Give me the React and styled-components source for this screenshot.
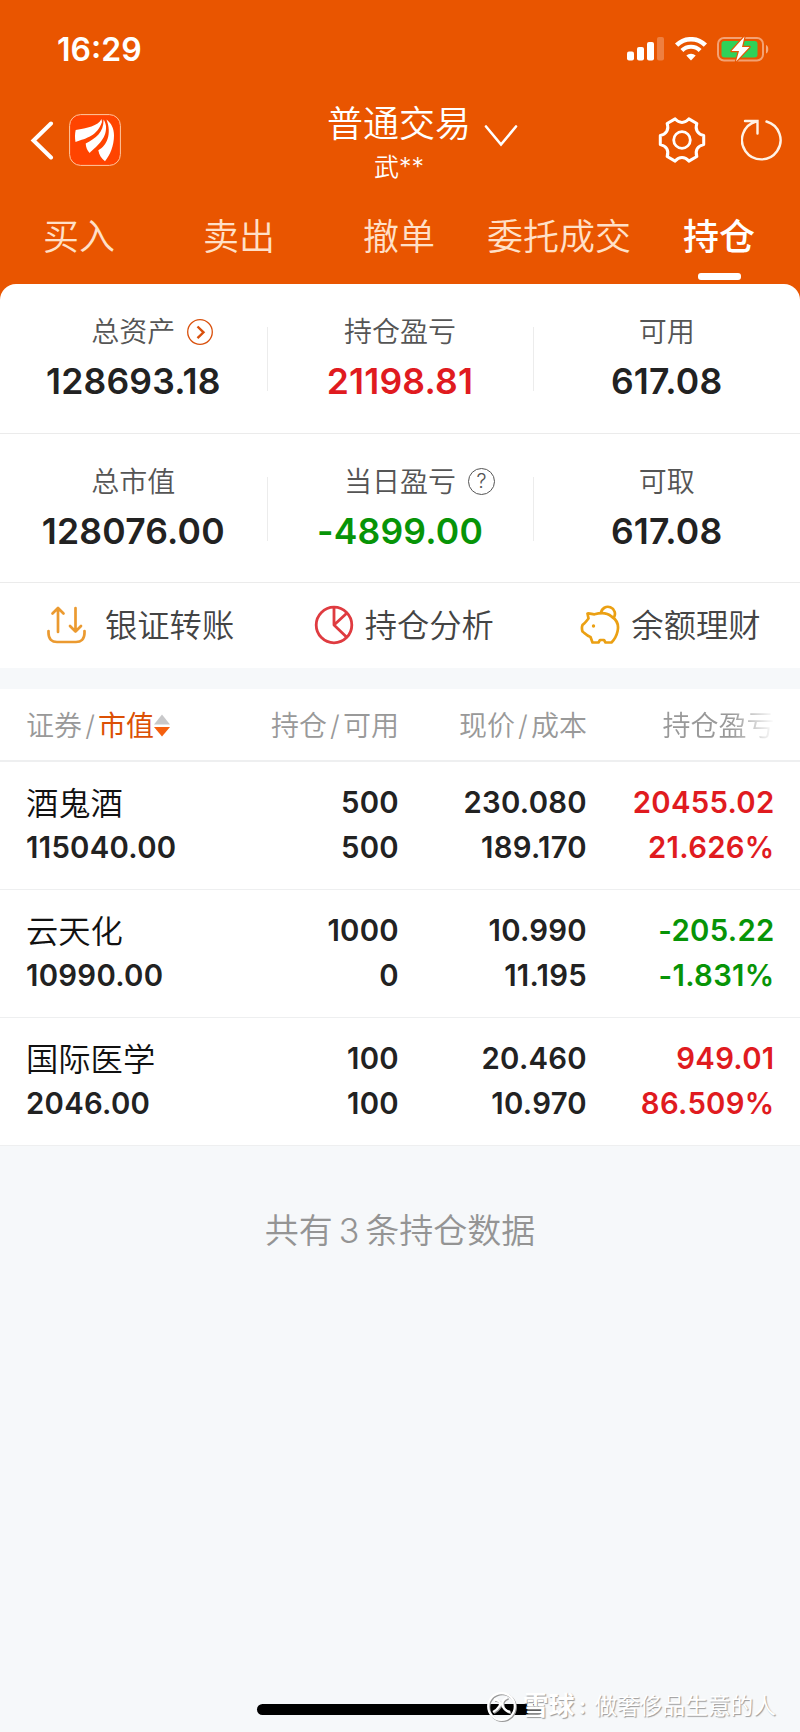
import styled, { createGlobalStyle } from "styled-components";

const summary = [
  [
    { label: "总资产", value: "128693.18", icon: "arrow" },
    { label: "持仓盈亏", value: "21198.81", tone: "up" },
    { label: "可用", value: "617.08" },
  ],
  [
    { label: "总市值", value: "128076.00" },
    { label: "当日盈亏", value: "-4899.00", tone: "down", icon: "help" },
    { label: "可取", value: "617.08" },
  ],
];

const tabs = ["买入", "卖出", "撤单", "委托成交", "持仓"];

const holdings = [
  {
    name: "酒鬼酒",
    marketValue: "115040.00",
    amount: "500",
    available: "500",
    price: "230.080",
    cost: "189.170",
    profit: "20455.02",
    percent: "21.626%",
    tone: "up",
  },
  {
    name: "云天化",
    marketValue: "10990.00",
    amount: "1000",
    available: "0",
    price: "10.990",
    cost: "11.195",
    profit: "-205.22",
    percent: "-1.831%",
    tone: "down",
  },
  {
    name: "国际医学",
    marketValue: "2046.00",
    amount: "100",
    available: "100",
    price: "20.460",
    cost: "10.970",
    profit: "949.01",
    percent: "86.509%",
    tone: "up",
  },
];

const tones = { up: "#e01b1f", down: "#079407" };

export default function App() {
  return (
    <>
      <GlobalStyle />
      <Screen>
        <Header>
          <StatusBar>
            <Time>16:29</Time>
            <StatusIcons>
              <SignalIcon />
              <WifiIcon />
              <BatteryIcon />
            </StatusIcons>
          </StatusBar>
          <TitleBar>
            <BarSide>
              <BackIcon />
              <LogoIcon />
            </BarSide>
            <TitleBlock>
              <Title>普通交易</Title>
              <DownIcon />
              <Account>武**</Account>
            </TitleBlock>
            <BarSide $end>
              <GearIcon />
              <RefreshIcon />
            </BarSide>
          </TitleBar>
          <Tabs>
            {tabs.map((tab) => (
              <Tab key={tab} $active={tab === "持仓"}>
                {tab}
              </Tab>
            ))}
          </Tabs>
        </Header>

        <Panel>
          {summary.map((row, i) => (
            <SummaryRow key={i}>
              {row.map((item) => (
                <SummaryCell key={item.label}>
                  <SummaryLabel>
                    <span>{item.label}</span>
                    {item.icon === "arrow" && <ArrowCircleIcon />}
                    {item.icon === "help" && <HelpCircle>?</HelpCircle>}
                  </SummaryLabel>
                  <SummaryValue $tone={item.tone}>{item.value}</SummaryValue>
                </SummaryCell>
              ))}
            </SummaryRow>
          ))}
          <Actions>
            <Action $gap="19px">
              <TransferIcon />
              银证转账
            </Action>
            <Action $gap="11px">
              <PieIcon />
              持仓分析
            </Action>
            <Action $gap="11px">
              <PigIcon />
              余额理财
            </Action>
          </Actions>
        </Panel>

        <Holdings>
          <HoldingsHead>
            <HeadCell>
              证券<Slash>/</Slash>
              <Sorted>市值</Sorted>
              <SortIcon />
            </HeadCell>
            <HeadCell $end>
              持仓<Slash>/</Slash>可用
            </HeadCell>
            <HeadCell $end>
              现价<Slash>/</Slash>成本
            </HeadCell>
            <HeadCell $end $fade>
              持仓盈亏
            </HeadCell>
          </HoldingsHead>
          {holdings.map((h) => (
            <HoldingRow key={h.name}>
              <HoldingCell>
                <StockName>{h.name}</StockName>
                <Figure>{h.marketValue}</Figure>
              </HoldingCell>
              <HoldingCell $end>
                <Figure>{h.amount}</Figure>
                <Figure>{h.available}</Figure>
              </HoldingCell>
              <HoldingCell $end>
                <Figure>{h.price}</Figure>
                <Figure>{h.cost}</Figure>
              </HoldingCell>
              <HoldingCell $end>
                <Figure $tone={h.tone}>{h.profit}</Figure>
                <Figure $tone={h.tone}>{h.percent}</Figure>
              </HoldingCell>
            </HoldingRow>
          ))}
        </Holdings>

        <Total>
          共有<TotalCount>3</TotalCount>条持仓数据
        </Total>

        <Bottom>
          <HomeIndicator />
          <Watermark>
            <SnowballIcon />
            <Brand>雪球</Brand>
            <Colon>:</Colon>
            <span>做奢侈品生意的人</span>
          </Watermark>
        </Bottom>
      </Screen>
    </>
  );
}

function SignalIcon() {
  return (
    <svg width="38" height="24" viewBox="0 0 38 24" fill="#fff">
      <rect x="0" y="14.5" width="7" height="9" rx="2" />
      <rect x="10" y="10" width="7" height="13.5" rx="2" />
      <rect x="20" y="5" width="7" height="18.5" rx="2" />
      <rect x="30" y="0" width="7" height="23.5" rx="2" opacity="0.25" />
    </svg>
  );
}

function WifiIcon() {
  return (
    <svg width="32" height="24" viewBox="0 0 32 24" fill="none" stroke="#fff">
      <path d="M1.6 8.2a20.4 20.4 0 0 1 28.8 0" strokeWidth="4.6" />
      <path d="M6.9 13.5a12.9 12.9 0 0 1 18.2 0" strokeWidth="4.2" />
      <path
        d="M11.3 18.6a6.8 6.8 0 0 1 9.4 0L16 23.4z"
        fill="#fff"
        stroke="none"
      />
    </svg>
  );
}

function BatteryIcon() {
  return (
    <svg width="53" height="28" viewBox="0 0 53 28">
      <rect
        x="1"
        y="3"
        width="45"
        height="22.5"
        rx="6"
        fill="none"
        stroke="#fff"
        strokeOpacity="0.45"
        strokeWidth="2"
      />
      <path d="M49 10v8.5c3-1 3-7.5 0-8.5z" fill="#fff" opacity="0.5" />
      <rect x="4.5" y="6" width="36" height="16.5" rx="3" fill="#30d158" />
      <path
        d="M27.5 1.5 14.5 16H22L19 26.5 32.5 12H25z"
        fill="#fff"
        stroke="#e95500"
        strokeWidth="2.4"
        paintOrder="stroke"
        strokeLinejoin="round"
      />
    </svg>
  );
}

function BackIcon() {
  return (
    <svg width="24" height="40" viewBox="0 0 24 40" fill="none">
      <path
        d="M21 3.5 3.5 20.5 21 37.5"
        stroke="#fff"
        strokeWidth="4"
        strokeLinecap="round"
      />
    </svg>
  );
}

function LogoIcon() {
  return (
    <svg width="52" height="52" viewBox="0 0 52 52">
      <rect
        x="0.6"
        y="0.6"
        width="50.8"
        height="50.8"
        rx="11"
        fill="#ff4400"
        stroke="#ffc9a0"
      />
      <g fill="#fff">
        <path d="M32.5 5C29 12 18 14 6.7 16 5.8 20 5.8 24 6.5 28 18 24 28 22 33 8z" />
        <path d="M34.6 5.5C34.5 19 27 24 16.7 29.5c.2 4 1.5 7 4 9.5C26 33 38 26 37 12c-.5-3-1.4-5-2.4-6.5z" />
        <path d="M37.5 5.5C42 9 45 14 45 21.5c0 10.5-4 19.5-9 25.8-3.5-2.5-6-6.5-6.7-11C38 31.5 43 20 37.5 5.5z" />
      </g>
    </svg>
  );
}

function DownIcon() {
  return (
    <svg width="34" height="24" viewBox="0 0 34 24" fill="none">
      <path
        d="M2 2.5 17 20.5 32 2.5"
        stroke="#fff"
        strokeWidth="2.6"
        strokeLinecap="round"
      />
    </svg>
  );
}

// six flat teeth joined by rounded valleys
function gearPath(cx, cy, outer, inner) {
  const at = (deg, r) => {
    const rad = (deg * Math.PI) / 180;
    return `${(cx + r * Math.cos(rad)).toFixed(2)} ${(cy + r * Math.sin(rad)).toFixed(2)}`;
  };
  let d = `M${at(-12, outer)}`;
  for (let a = 0; a < 360; a += 60) {
    d += `L${at(a + 12, outer)}C${at(a + 20, inner)} ${at(a + 40, inner)} ${at(a + 48, outer)}`;
  }
  return d + "Z";
}

function GearIcon() {
  return (
    <svg width="48" height="48" viewBox="0 0 48 48" fill="none" stroke="#fff">
      <path
        d={gearPath(24, 24, 22.2, 16.6)}
        strokeWidth="3"
        strokeLinejoin="round"
      />
      <circle cx="24" cy="24" r="8.3" strokeWidth="2.8" />
    </svg>
  );
}

function RefreshIcon() {
  return (
    <svg width="42" height="42" viewBox="0 0 42 42" fill="none">
      <path
        d="M25.5 2.5A19.3 19.3 0 1 1 15 2.5M4 2H16.5V14.5"
        stroke="#fff2e6"
        strokeWidth="2.4"
        strokeLinecap="round"
      />
    </svg>
  );
}

function ArrowCircleIcon() {
  return (
    <svg width="26" height="26" viewBox="0 0 26 26" fill="none" stroke="#d9500c">
      <circle cx="13" cy="13" r="12.3" strokeWidth="1.3" />
      <path d="m10.5 7.5 6 5.8-6 5.8" strokeWidth="2.4" />
    </svg>
  );
}

function TransferIcon() {
  return (
    <svg
      width="39"
      height="38"
      viewBox="0 0 39 38"
      fill="none"
      stroke="#eb9a30"
      strokeWidth="2.7"
      strokeLinecap="round"
      strokeLinejoin="round"
    >
      <path d="M11 26V2.5M5.5 7.5 11 2l5.5 5.5M28.5 2v23.5M23 20l5.5 5.5L34 20" />
      <path d="M1.5 25v2c0 6 3.5 9 8.5 9h19c5 0 8.5-3 8.5-9v-2" />
    </svg>
  );
}

function PieIcon() {
  return (
    <svg
      width="40"
      height="40"
      viewBox="0 0 40 40"
      fill="none"
      stroke="#df3b40"
      strokeWidth="2.8"
      strokeLinejoin="round"
    >
      <circle cx="20" cy="20" r="17.8" />
      <path d="M20 2.5V20L33 8M20 20l13 12.5" />
    </svg>
  );
}

function PigIcon() {
  return (
    <svg
      width="40"
      height="40"
      viewBox="0 0 40 40"
      fill="none"
      stroke="#eba013"
      strokeWidth="2.7"
      strokeLinejoin="round"
      strokeLinecap="round"
    >
      <path d="M7.5 8.5c3-.5 4.5 1 7 .8C21 7.5 27 7.5 31.5 11.5 37 15 39 20.5 37.5 26.5c-1 4.5-3 8-6 11H25.5L24 35H20l-1.5 2.5h-6L10.5 32C7 31 5 28.5 2.5 26.5c-.8-2.5-.8-4.5 0-6.5C5 18.5 6 16.5 8.5 13.5z" />
      <path d="M21 7.8a7 7 0 1 1 12.8 4.8" />
      <circle cx="13.5" cy="21" r="1.7" fill="#eba013" stroke="none" />
    </svg>
  );
}

function SortIcon() {
  return (
    <svg width="16" height="24" viewBox="0 0 16 24">
      <path d="M8 0.5 16 10.5H0z" fill="#c8c8ca" />
      <path d="M0 13h16L8 22.5z" fill="#f5600f" />
    </svg>
  );
}

function SnowballIcon() {
  return (
    <svg width="31" height="31" viewBox="0 0 31 31" fill="none" stroke="#fff">
      <circle cx="15.5" cy="15.5" r="13.3" strokeWidth="2.2" />
      <path
        d="M8 8.5c5 0 7.5 3 5.5 6.5-1.5 2.5-3.5 4.5-6.5 6M21.5 6.5c-3.5 1.5-6 4.5-5 8 1 3.5 4 5.5 7.5 6.5"
        strokeWidth="2.4"
      />
    </svg>
  );
}

const GlobalStyle = createGlobalStyle`
  * {
    box-sizing: border-box;
  }

  body {
    margin: 0;
    background: #f6f8fa;
    font-family: Inter, "Noto Sans CJK SC", sans-serif;
  }

  svg {
    display: block;
    flex-shrink: 0;
  }
`;

const Screen = styled.main`
  width: 800px;
  height: 1732px;
  display: flex;
  flex-direction: column;
  overflow: hidden;
  background: #f6f8fa;
  color: #222;
`;

const Header = styled.header`
  height: 300px;
  flex-shrink: 0;
  color: #fff;
  background: #e95500;
`;

const StatusBar = styled.div`
  height: 98px;
  padding: 0 30px 0 57px;
  display: flex;
  align-items: center;
  justify-content: space-between;
`;

const Time = styled.span`
  font-size: 32px;
  font-weight: 600;
`;

const StatusIcons = styled.div`
  display: flex;
  align-items: center;
  gap: 10px;
`;

const TitleBar = styled.div`
  height: 84px;
  padding: 0 17px 0 30px;
  display: grid;
  grid-template-columns: 1fr auto 1fr;
  grid-template-rows: 84px;
  align-items: center;
`;

const BarSide = styled.div`
  width: ${({ $end }) => ($end ? "125px" : "91px")};
  display: flex;
  align-items: center;
  justify-content: space-between;
  justify-self: ${({ $end }) => ($end ? "end" : "start")};
`;

const TitleBlock = styled.div`
  display: grid;
  grid-template-columns: 34px 146px 34px;
  column-gap: 11.5px;
  justify-items: center;
  align-items: center;
  /* the side columns differ in padding */
  margin-right: 15px;

  svg {
    margin-top: 24px;
  }
`;

const Title = styled.h1`
  grid-column: 2;
  margin: 0;
  font-size: 36px;
  font-weight: 350;
  line-height: 52px;
  white-space: nowrap;
`;

const Account = styled.span`
  grid-column: 2;
  padding-top: 1px;
  font-size: 25px;
  font-weight: 350;
  line-height: 32px;
`;

const Tabs = styled.nav`
  display: grid;
  grid-template-columns: repeat(5, 160px);
  margin-left: -1px;
  padding-top: 37px;
`;

const Tab = styled.span`
  display: flex;
  flex-direction: column;
  align-items: center;
  gap: 18px;
  font-size: 36px;
  line-height: 36px;
  font-weight: ${({ $active }) => ($active ? 500 : 350)};
  color: ${({ $active }) => ($active ? "#fff" : "#ffe0c8")};

  &::after {
    content: "";
    width: 43px;
    height: 6.5px;
    border-radius: 3px;
    background: ${({ $active }) => ($active ? "#fff" : "transparent")};
  }
`;

const Panel = styled.section`
  height: 384px;
  margin-top: -16px;
  flex-shrink: 0;
  border-radius: 16px 16px 0 0;
  background: #fff;
`;

const SummaryRow = styled.div`
  height: 149.5px;
  display: grid;
  grid-template-columns: repeat(3, 1fr);
  border-bottom: 1px solid #ebebeb;
`;

const SummaryCell = styled.div`
  display: flex;
  flex-direction: column;
  align-items: center;
  padding-top: 32px;

  & + & {
    background: linear-gradient(#ececec, #ececec) 0 43px / 1px 64px no-repeat;
  }
`;

const SummaryLabel = styled.div`
  width: 100%;
  height: 32px;
  display: grid;
  grid-template-columns: 1fr auto 1fr;
  column-gap: 12px;
  align-items: center;
  font-size: 28px;
  line-height: 32px;
  font-weight: 350;
  color: #555;

  span {
    grid-column: 2;
  }
`;

const HelpCircle = styled.i`
  width: 27px;
  height: 27px;
  border: 1px solid #555;
  border-radius: 50%;
  font-size: 20px;
  font-style: normal;
  line-height: 25px;
  text-align: center;
`;

const SummaryValue = styled.strong`
  margin-top: 14px;
  font-size: 35.5px;
  line-height: 40px;
  font-weight: 600;
  letter-spacing: 0.2px;
  color: ${({ $tone }) => tones[$tone] || "#222"};
`;

const Actions = styled.div`
  height: 84px;
  display: grid;
  grid-template-columns: repeat(3, 1fr);
`;

const Action = styled.div`
  display: flex;
  align-items: center;
  gap: ${({ $gap }) => $gap};
  padding-left: 47px;
  font-size: 32.3px;
  line-height: 37px;
  font-weight: 350;
  color: #444;
`;

const Holdings = styled.section`
  margin-top: 21px;
  background: #fff;
`;

const columns = "183px 190px 188px 187.5px";

const HoldingsHead = styled.div`
  height: 73px;
  padding: 2px 0 0 26px;
  display: grid;
  grid-template-columns: ${columns};
  align-items: center;
  line-height: 32px;
  border-bottom: 2px solid #eeeff0;
`;

const HeadCell = styled.div`
  display: flex;
  align-items: center;
  justify-content: ${({ $end }) => ($end ? "flex-end" : "flex-start")};
  font-size: 28px;
  font-weight: 350;
  color: #999;
  white-space: nowrap;
  mask-image: ${({ $fade }) =>
    $fade ? "linear-gradient(to left, transparent, #000 44px)" : "none"};
`;

const Slash = styled.span`
  width: 16px;
  text-align: center;
`;

const Sorted = styled.span`
  color: #dc5004;
  font-weight: 400;
`;

const HoldingRow = styled.div`
  height: 128px;
  padding: 19px 0 0 26px;
  display: grid;
  grid-template-columns: ${columns};
  border-bottom: 1px solid #eeeff0;
`;

const HoldingCell = styled.div`
  display: flex;
  flex-direction: column;
  align-items: ${({ $end }) => ($end ? "flex-end" : "flex-start")};
`;

const StockName = styled.span`
  height: 44.5px;
  font-size: 32.3px;
  line-height: 46.5px;
  font-weight: 350;
  color: #111;
`;

const Figure = styled.span`
  font-size: 29.3px;
  line-height: 44.5px;
  font-weight: 600;
  letter-spacing: 0.3px;
  color: ${({ $tone }) => tones[$tone] || "#222"};
`;

const Total = styled.p`
  margin: 65px 0 0;
  font-size: 34px;
  line-height: 40px;
  font-weight: 350;
  text-align: center;
  color: #949494;
`;

const TotalCount = styled.span`
  margin: 0 6px;
`;

const Bottom = styled.footer`
  margin-top: auto;
  height: 56px;
  display: grid;
  align-items: start;
`;

const HomeIndicator = styled.div`
  grid-area: 1 / 1;
  width: 286px;
  height: 11px;
  margin: 28px auto 0;
  border-radius: 6px;
  background: #000;
`;

const Watermark = styled.div`
  grid-area: 1 / 1;
  height: 36px;
  margin-top: 12px;
  padding-right: 24px;
  display: flex;
  align-items: center;
  justify-content: flex-end;
  font-size: 22.7px;
  line-height: 30px;
  color: #fff;
  text-shadow: 1px 1px 1px #999;
  z-index: 1;

  svg {
    margin-right: 5px;
    filter: drop-shadow(1px 1px 0.5px #999);
  }
`;

const Brand = styled.b`
  font-size: 26px;
  font-weight: 700;
`;

const Colon = styled.span`
  width: 20px;
  padding-left: 4px;
  font-weight: 700;
`;
